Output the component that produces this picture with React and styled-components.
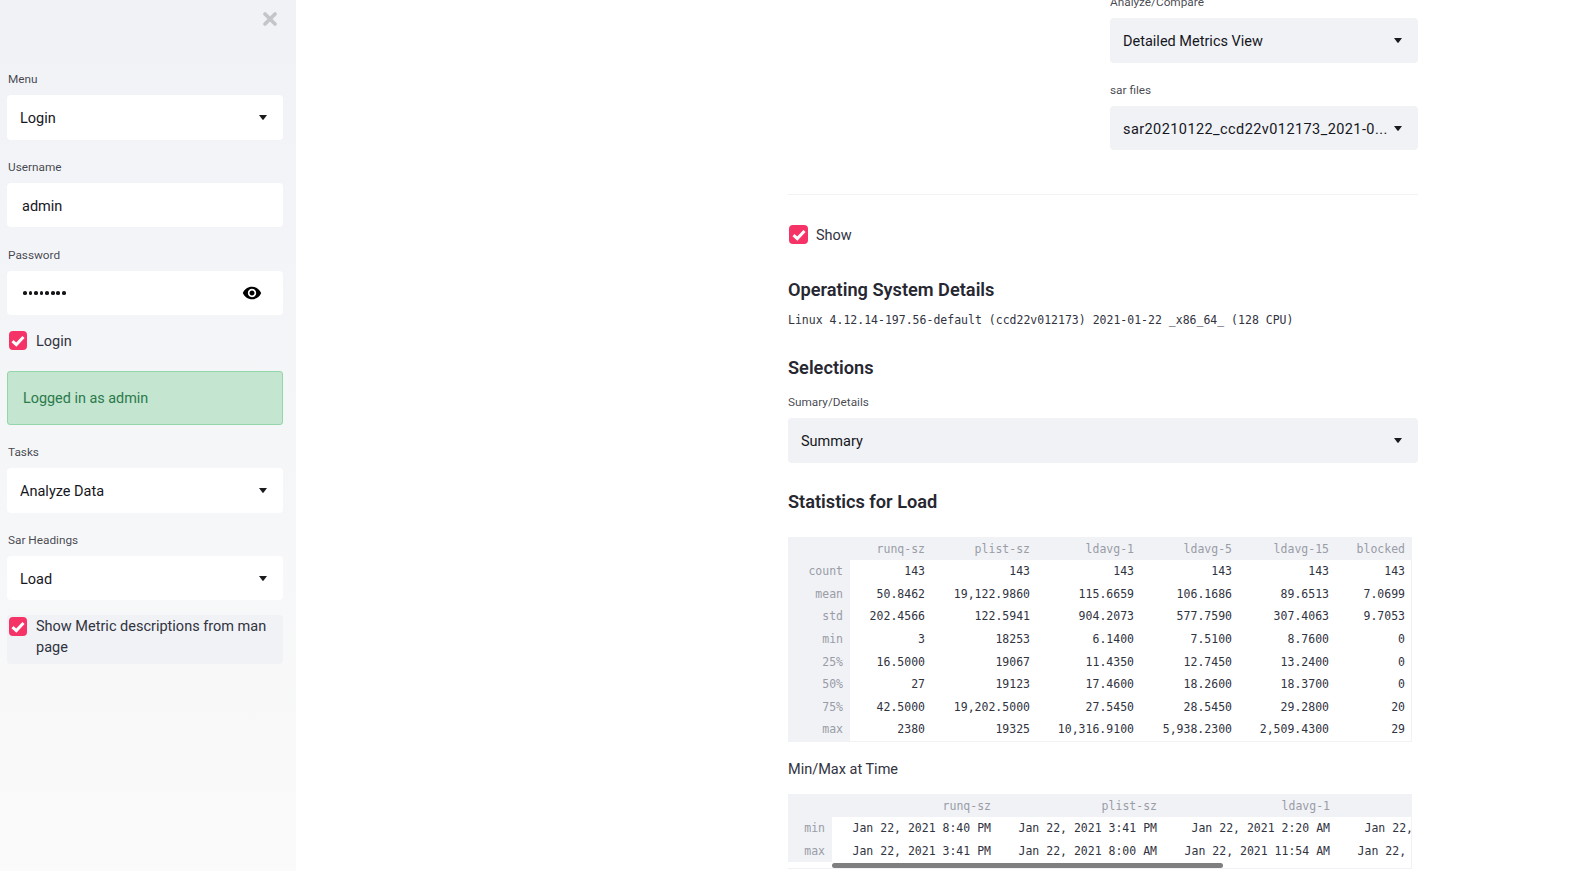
import React from "react";
import styled, { createGlobalStyle } from "styled-components";
import { MdVisibility } from "react-icons/md";

const Global = createGlobalStyle`
  html, body {
    margin: 0;
    height: 871px;
    overflow: hidden;
    background: #fff;
    color: #262730;
    font-family: Roboto, "Noto Sans", sans-serif;
  }
`;

const Page = styled.div`
  display: flex;
  height: 871px;
  overflow: hidden;
`;

const Sidebar = styled.aside`
  width: 296px;
  flex: none;
  box-sizing: border-box;
  padding: 0 13px 0 7px;
  background: linear-gradient(#f0f2f6, #fafafa);
`;

const CloseRow = styled.div`
  display: flex;
  justify-content: flex-end;
  height: 71px;
  padding: 12px 6px 0 0;
  box-sizing: border-box;
  color: #c4c5c9;
`;

const Main = styled.main`
  width: 630px;
  margin: -6px 0 0 492px;
  flex: none;
`;

const Field = styled.div`
  margin-bottom: ${(p) => p.$gap ?? 19}px;
`;

const Label = styled.div`
  font-size: 11.8px;
  line-height: 17px;
  height: 16px;
  margin-bottom: 8px;
  padding-left: ${(p) => (p.$inset ? 1 : 0)}px;
  color: rgba(38, 39, 48, 0.85);
`;

const Select = styled.div`
  display: flex;
  align-items: center;
  justify-content: space-between;
  box-sizing: border-box;
  height: ${(p) => p.$h ?? 45}px;
  padding: 0 16px 0 13px;
  border-radius: 4px;
  font-size: 14.5px;
  color: #16161c;
  background: ${(p) => (p.$grey ? "#f0f2f6" : "#fff")};
`;

const SelectText = styled.span`
  white-space: nowrap;
  overflow: hidden;
  margin-top: 2px;
  letter-spacing: ${(p) => (p.$spread ? 0.42 : 0)}px;
`;

const Caret = () => (
  <svg width="8" height="5" viewBox="0 0 8 5" style={{ flex: "none" }}>
    <path d="M0 0h8L4.6 4.6a.8.8 0 0 1-1.2 0z" fill="#1b1b1f" />
  </svg>
);

const Input = styled.div`
  display: flex;
  align-items: center;
  justify-content: space-between;
  box-sizing: border-box;
  height: 44px;
  padding: 0 21px 0 15px;
  border-radius: 4px;
  font-size: 14.5px;
  color: #16161c;
  background: #fff;
`;

const InputText = styled.span`
  margin-top: 2px;
`;

const Dots = styled.span`
  display: flex;
  gap: 1.9px;
  margin-left: 1px;
`;

const Dot = styled.i`
  width: 3.7px;
  height: 3.7px;
  border-radius: 50%;
  background: #16161a;
`;

const CheckRow = styled.div`
  display: flex;
  align-items: flex-start;
  gap: ${(p) => (p.$flush ? 8 : 9)}px;
  padding: ${(p) => (p.$panel ? "2px 0 6px 2px" : "0 0 0 2px")};
  margin-left: ${(p) => (p.$flush ? -1 : 0)}px;
  border-radius: 4px;
  background: ${(p) => (p.$panel ? "#f0f2f6" : "transparent")};
  font-size: 14.5px;
  line-height: 21px;
  color: #31333f;
`;

const CheckBox = styled.span`
  width: ${(p) => (p.$wide ? 19 : 18)}px;
  height: 19px;
  flex: none;
  display: flex;
  align-items: center;
  justify-content: center;
  border-radius: 4px;
  background: #f63366;
`;

const CheckText = styled.span`
  margin: ${(p) => (p.$panel ? "-1px 0 0" : "0 0 -1px")};
`;

const Check = ({ children, ...rest }) => (
  <CheckRow {...rest}>
    <CheckBox $wide={rest.$flush}>
      <svg width="14" height="12" viewBox="0 0 14 12">
        <path d="M1.5 6.2l3.8 3.4 7.2-7.6" fill="none" stroke="#fff" strokeWidth="3" />
      </svg>
    </CheckBox>
    <CheckText $panel={rest.$panel}>{children}</CheckText>
  </CheckRow>
);

const Alert = styled.div`
  box-sizing: border-box;
  height: 54px;
  margin: 20px 0 19px;
  padding: 0 15px;
  display: flex;
  align-items: center;
  border: 1px solid #93d6aa;
  border-radius: 3px;
  background: #c4e5d0;
  color: #2b7a4b;
  font-size: 14.4px;
`;

const RightColumn = styled.div`
  display: flex;
  justify-content: flex-end;
`;

const ColumnInner = styled.div`
  width: 308px;
`;

const Rule = styled.hr`
  border: none;
  height: 1px;
  margin: 44px 0 30px;
  background: #f0f2f6;
`;

const Heading = styled.h3`
  margin: ${(p) => p.$top}px 0 ${(p) => p.$bottom}px;
  font-size: 18.2px;
  font-weight: 600;
  line-height: 26px;
  color: #262730;
`;

const MonoLine = styled.div`
  font-family: "DejaVu Sans Mono", "Liberation Mono", monospace;
  font-size: 11.5px;
  line-height: 16px;
  color: #31333f;
`;

const Caption = styled.div`
  margin: 17px 0 13px;
  font-size: 14.5px;
  line-height: 22px;
  color: #31333f;
`;

const TableFrame = styled.div`
  position: relative;
  width: 624px;
  box-sizing: border-box;
  height: ${(p) => p.$h}px;
  overflow: hidden;
  border-right: 1px solid #f0f2f6;
  border-bottom: 1px solid #f0f2f6;
`;

const Table = styled.table`
  border-collapse: collapse;
  table-layout: fixed;
  width: ${(p) => p.$w}px;
  font-family: "DejaVu Sans Mono", "Liberation Mono", monospace;
  font-size: 11.5px;
  color: #31333f;
`;

const Head = styled.th`
  height: ${(p) => (p.$row ? 22.6 : 23)}px;
  padding: 0 7px;
  box-sizing: border-box;
  text-align: right;
  font-weight: 400;
  white-space: nowrap;
  color: #9a9ca6;
  background: #f0f2f6;
`;

const Cell = styled.td`
  height: 22.6px;
  padding: 0 7px;
  box-sizing: border-box;
  text-align: right;
  white-space: nowrap;
  overflow: hidden;
`;

const Thumb = styled.div`
  position: absolute;
  left: 44px;
  bottom: 0;
  width: 391px;
  height: 5px;
  border-radius: 3px;
  background: #7f7f7f;
`;

const stats = {
  widths: [62, 82, 105, 104, 98, 97, 76],
  head: ["runq-sz", "plist-sz", "ldavg-1", "ldavg-5", "ldavg-15", "blocked"],
  rows: [
    ["count", "143", "143", "143", "143", "143", "143"],
    ["mean", "50.8462", "19,122.9860", "115.6659", "106.1686", "89.6513", "7.0699"],
    ["std", "202.4566", "122.5941", "904.2073", "577.7590", "307.4063", "9.7053"],
    ["min", "3", "18253", "6.1400", "7.5100", "8.7600", "0"],
    ["25%", "16.5000", "19067", "11.4350", "12.7450", "13.2400", "0"],
    ["50%", "27", "19123", "17.4600", "18.2600", "18.3700", "0"],
    ["75%", "42.5000", "19,202.5000", "27.5450", "28.5450", "29.2800", "20"],
    ["max", "2380", "19325", "10,316.9100", "5,938.2300", "2,509.4300", "29"],
  ],
};

const times = {
  widths: [44, 166, 166, 173, 173],
  head: ["runq-sz", "plist-sz", "ldavg-1", "ldavg-5"],
  rows: [
    ["min", "Jan 22, 2021 8:40 PM", "Jan 22, 2021 3:41 PM", "Jan 22, 2021 2:20 AM", "Jan 22, 2021 2:20 AM"],
    ["max", "Jan 22, 2021 3:41 PM", "Jan 22, 2021 8:00 AM", "Jan 22, 2021 11:54 AM", "Jan 22, 2021 11:54 AM"],
  ],
};

const DataTable = ({ data }) => (
  <Table $w={data.widths.reduce((a, b) => a + b, 0)}>
    <colgroup>
      {data.widths.map((w, i) => (
        <col key={i} style={{ width: w }} />
      ))}
    </colgroup>
    <thead>
      <tr>
        <Head />
        {data.head.map((h) => (
          <Head key={h}>{h}</Head>
        ))}
      </tr>
    </thead>
    <tbody>
      {data.rows.map((row) => (
        <tr key={row[0]}>
          {row.map((v, i) => (i === 0 ? <Head $row key={i}>{v}</Head> : <Cell key={i}>{v}</Cell>))}
        </tr>
      ))}
    </tbody>
  </Table>
);

export default function App() {
  return (
    <Page>
      <Global />
      <Sidebar>
        <CloseRow>
          <svg width="14" height="14" viewBox="0 0 14 14">
            <path d="M2 2l10 10M12 2L2 12" stroke="currentColor" strokeWidth="3.6" strokeLinecap="round" />
          </svg>
        </CloseRow>
        <Field>
          <Label $inset>Menu</Label>
          <Select>
            <SelectText>Login</SelectText>
            <Caret />
          </Select>
        </Field>
        <Field $gap={20}>
          <Label $inset>Username</Label>
          <Input>
            <InputText>admin</InputText>
          </Input>
        </Field>
        <Field $gap={16}>
          <Label $inset>Password</Label>
          <Input>
            <Dots>
              {Array.from({ length: 8 }, (_, i) => (
                <Dot key={i} />
              ))}
            </Dots>
            <MdVisibility size={20} color="#000" />
          </Input>
        </Field>
        <Check>Login</Check>
        <Alert>Logged in as admin</Alert>
        <Field>
          <Label $inset>Tasks</Label>
          <Select>
            <SelectText>Analyze Data</SelectText>
            <Caret />
          </Select>
        </Field>
        <Field $gap={15}>
          <Label $inset>Sar Headings</Label>
          <Select $h={44}>
            <SelectText>Load</SelectText>
            <Caret />
          </Select>
        </Field>
        <Check $panel>Show Metric descriptions from man page</Check>
      </Sidebar>
      <Main>
        <RightColumn>
          <ColumnInner>
            <Field>
              <Label>Analyze/Compare</Label>
              <Select $grey>
                <SelectText>Detailed Metrics View</SelectText>
                <Caret />
              </Select>
            </Field>
            <Field $gap={0}>
              <Label>sar files</Label>
              <Select $grey $h={44}>
                <SelectText $spread>sar20210122_ccd22v012173_2021-0...</SelectText>
                <Caret />
              </Select>
            </Field>
          </ColumnInner>
        </RightColumn>
        <Rule />
        <Check $flush>Show</Check>
        <Heading $top={32} $bottom={9}>Operating System Details</Heading>
        <MonoLine>Linux 4.12.14-197.56-default (ccd22v012173) 2021-01-22 _x86_64_ (128 CPU)</MonoLine>
        <Heading $top={27} $bottom={13}>Selections</Heading>
        <Field $gap={26}>
          <Label>Sumary/Details</Label>
          <Select $grey>
            <SelectText>Summary</SelectText>
            <Caret />
          </Select>
        </Field>
        <Heading $top={0} $bottom={22}>Statistics for Load</Heading>
        <TableFrame $h={205}>
          <DataTable data={stats} />
        </TableFrame>
        <Caption>Min/Max at Time</Caption>
        <TableFrame $h={75}>
          <DataTable data={times} />
          <Thumb />
        </TableFrame>
      </Main>
    </Page>
  );
}
